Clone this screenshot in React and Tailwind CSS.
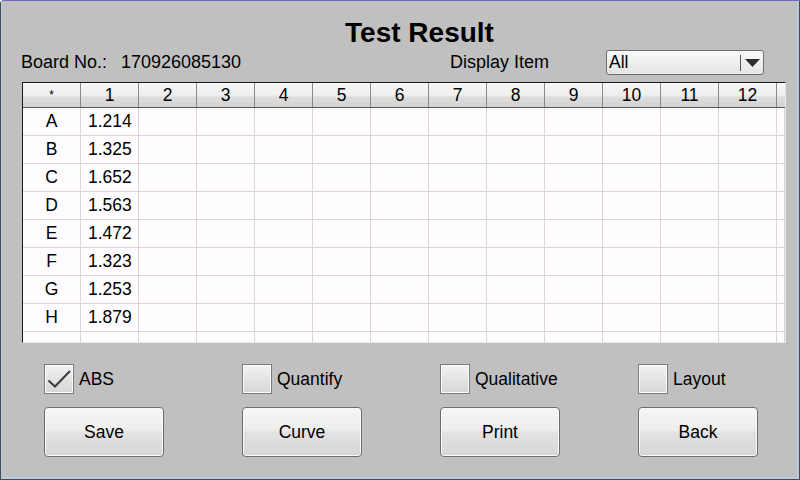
import React from 'react'

const font = { fontFamily: '"Liberation Sans", Arial, sans-serif' }

const cols = ['1', '2', '3', '4', '5', '6', '7', '8', '9', '10', '11', '12']
const rows = [
  ['A', '1.214'],
  ['B', '1.325'],
  ['C', '1.652'],
  ['D', '1.563'],
  ['E', '1.472'],
  ['F', '1.323'],
  ['G', '1.253'],
  ['H', '1.879'],
]

function CheckBox({ label, checked }) {
  return (
    <div className="flex items-center gap-[5px]">
      <div className="w-[30px] h-[30px] border border-[#7c7c7c] bg-[linear-gradient(to_bottom,#f2f2f2,#d6d6d6)] shadow-[inset_0_0_0_1px_#fbfbfb] relative">
        {checked && (
          <svg width="30" height="30" viewBox="0 0 30 30" className="absolute -left-px -top-px">
            <polyline points="4.5,16.5 11,22.5 26,7" fill="none" stroke="#3c3c3c" strokeWidth="2" />
          </svg>
        )}
      </div>
      <span className="text-[17.5px] text-black">{label}</span>
    </div>
  )
}

function Button({ label }) {
  return (
    <button className="w-[120px] h-[50px] rounded-[4px] border border-[#6e6e6e] bg-[linear-gradient(to_bottom,#f5f5f3_0%,#eeeeec_45%,#e2e2e2_52%,#d8d6d8_100%)] shadow-[inset_0_0_0_1px_#fafafa] text-[17.5px] text-black">
      {label}
    </button>
  )
}

export default function App() {
  return (
    <div style={font} className="w-[800px] h-[480px] bg-[#c0c0c0] border-l border-r border-b border-[#484850] rounded-tl-[4px] border-t border-t-[#6a6ac0]">
      <div className="h-full border-l border-r-2 border-b-2 border-[#b6cce2] flex flex-col">
        {/* title */}
        <div className="mt-[16px] h-[32px] leading-[32px] text-center pl-[40px] text-[28px] font-bold text-black">
          Test Result
        </div>

        {/* board no. / display item */}
        <div className="flex items-center h-[25px] mt-[1px] ml-[19px] text-[18px] text-black">
          <span className="w-[100px]">Board No.:</span>
          <span className="w-[329px]">170926085130</span>
          <span className="w-[156px]">Display Item</span>
          <div className="w-[158px] h-[25px] rounded-[3px] border border-[#6e6e6e] bg-[linear-gradient(to_bottom,#fafafa,#e4e4e4)] flex items-center">
            <span className="pl-[2px] flex-1 text-[17.5px]">All</span>
            <div className="w-px h-[16px] bg-[#555]" />
            <div className="w-[22px] flex justify-center">
              <svg width="15" height="8" viewBox="0 0 15 8">
                <polygon points="0,0 15,0 7.5,8" fill="#2c2c2c" />
              </svg>
            </div>
          </div>
        </div>

        {/* table */}
        <div className="ml-[20px] mt-[7px] w-[764px] h-[261px] border-t border-l border-[#1a1a1a] border-r border-b border-r-[#e8e8e8] border-b-[#e8e8e8] bg-[#fffcff] overflow-hidden text-[17.5px] text-black">
          <div className="flex h-[25px] border-b border-[#5a5a5a] bg-[linear-gradient(to_bottom,#f6f6f4_0%,#efefed_50%,#dedede_60%,#d2d2d2_100%)]">
            <div className="w-[58px] border-r border-[#8a8a8a] flex items-center justify-center text-[12px]">*</div>
            {cols.map(c => (
              <div key={c} className="w-[58px] border-r border-[#8a8a8a] flex items-center justify-center">{c}</div>
            ))}
            <div className="flex-1" />
          </div>
          {rows.map(([r, v]) => (
            <div key={r} className="flex h-[28px] border-b border-[#d8d4d8]">
              <div className="w-[58px] border-r border-[#d8d4d8] flex items-center justify-center">{r}</div>
              <div className="w-[58px] border-r border-[#d8d4d8] flex items-center pl-[7px]">{v}</div>
              {cols.slice(1).map(c => (
                <div key={c} className="w-[58px] border-r border-[#d8d4d8]" />
              ))}
              <div className="flex-1 border-r border-[#d8d4d8]" />
            </div>
          ))}
          <div className="flex h-[10px]">
            {cols.concat(['x']).map(c => (
              <div key={c} className="w-[58px] border-r border-[#d8d4d8]" />
            ))}
            <div className="flex-1 border-r border-[#d8d4d8]" />
          </div>
        </div>

        {/* options */}
        <div className="mt-[21px] ml-[42px] grid grid-cols-[198px_198px_198px_198px]">
          <CheckBox label="ABS" checked />
          <CheckBox label="Quantify" />
          <CheckBox label="Qualitative" />
          <CheckBox label="Layout" />
        </div>

        {/* buttons */}
        <div className="mt-[13px] ml-[42px] grid grid-cols-[198px_198px_198px_198px]">
          <Button label="Save" />
          <Button label="Curve" />
          <Button label="Print" />
          <Button label="Back" />
        </div>
      </div>
    </div>
  )
}
